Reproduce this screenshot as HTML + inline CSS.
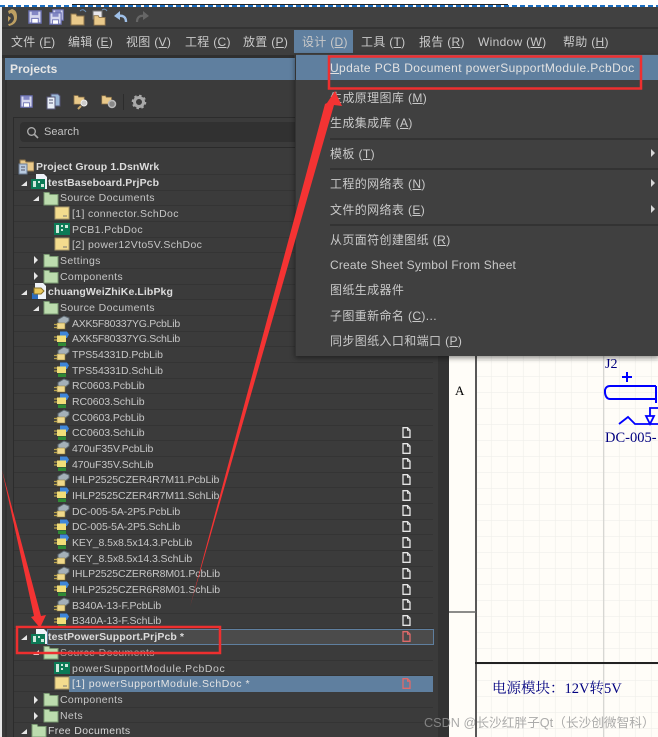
<!DOCTYPE html>
<html><head><meta charset="utf-8">
<style>
html,body{margin:0;padding:0;width:658px;height:737px;overflow:hidden;background:#3a3a3a}
body{position:relative;font-family:"Liberation Sans","Noto Sans CJK SC",sans-serif;color:#c9c9c9}
.a{position:absolute}
.m{position:absolute;top:34px;font-size:12px;line-height:16px;white-space:nowrap;letter-spacing:.3px}
.d{position:absolute;left:330px;font-size:12px;line-height:16px;white-space:nowrap;letter-spacing:.38px}
.r{position:absolute;font-size:10.5px;line-height:14px;margin-top:1px;white-space:nowrap;letter-spacing:.35px;color:#c6c6c6}
.c{letter-spacing:-.08px}
.p{letter-spacing:.55px}
.b{font-weight:bold;color:#dcdcdc;letter-spacing:.1px}
.l{position:absolute;left:14px;width:419px;height:1px;background:#343434}
.s{position:absolute;left:330px;width:328px;height:2px;background:#333}
.i{position:absolute;width:16px;height:16px}
.f{position:absolute;left:402px;width:9px;height:11px}
u{text-decoration:underline;text-underline-offset:1px}
</style></head><body>
<svg width="0" height="0" style="position:absolute">
<defs>
<symbol id="fold" viewBox="0 0 16 16"><path d="M1 2.500h5l1 2h8v10.500H1z" fill="#bcdcae" stroke="#7a9a72"/></symbol>
<symbol id="sch" viewBox="0 0 16 16"><path d="M1 2h14v12H1z" fill="#f3dc8e" stroke="#a89a6a"/><path d="M9 11h4" stroke="#777"/></symbol>
<symbol id="pcb" viewBox="0 0 16 16"><path d="M0 2h16v12H0z" fill="#0c7a56"/><path d="M2 4h3v8H2zM7 4h2v2H7zM7 8h2v2H7zM11 4h3v3h-3z" fill="#cfe8dc"/></symbol>
<symbol id="plib" viewBox="0 0 16 16"><path d="M4 4.500l6-3.500 5 2v3l-5 4-6-2z" fill="#a4b0b8" stroke="#5f6a72"/><path d="M3 8h8v6H3z" fill="#f0d98a" stroke="#8c7a3a" stroke-width=".6"/><path d="M0 9.500h3M0 12.500h3" stroke="#b9a24a" stroke-width="1.300"/></symbol>
<symbol id="slib" viewBox="0 0 16 16"><path d="M6 .5h7l2 3-2 3.500H6z" fill="#3f86d8"/><path d="M3 4.500h9v6.500H3z" fill="#f2de78"/><path d="M0 6h3M0 9h3" stroke="#b9a24a" stroke-width="1.300"/><path d="M4 11.500h8v3.500H4z" fill="#2f8a35"/></symbol>
<symbol id="prj" viewBox="0 0 16 16"><path d="M5 0h8l3 3v12H5z" fill="#eef2f8"/><path d="M0 5h14v10H0z" fill="#0c7a56"/><path d="M2 7h3v6H2zM7 7h2v2H7zM10 10h3v3h-3z" fill="#cfe8dc"/></symbol>
<symbol id="pkg" viewBox="0 0 16 16"><path d="M4 0h8l3 3v13H4z" fill="#eef2f8"/><path d="M1 10h6v6H1z" fill="#2b6cc0"/><path d="M3 5h7l3 3-3 3H3z" fill="#e8c75a" stroke="#86702a"/></symbol>
<symbol id="page" viewBox="0 0 9 11"><path d="M1 .7h4.500L8 3.200v7.100H1z" fill="none" stroke="currentColor" stroke-width="1.300"/><path d="M5.500 .7v2.600H8" fill="none" stroke="currentColor"/></symbol>
<symbol id="disk" viewBox="0 0 15 15"><path d="M1 1h13v13H1z" fill="#d6d8ee" stroke="#6d72b4" stroke-width="1.400"/><path d="M4 1.500h7v4H4z" fill="#8488c4"/><path d="M4 9h7v5H4z" fill="#fff" stroke="#6d72b4"/></symbol>
<symbol id="yf" viewBox="0 0 16 14"><path d="M1 2h5l1 2h7v9H1z" fill="#e9c98a" stroke="#8c734a"/></symbol>
<pattern id="g" width="16" height="16" patternUnits="userSpaceOnUse" x="491.700" y="393"><path d="M16 0V16M0 16H16" fill="none" stroke="#efeeea" stroke-width="1.200"/></pattern>
</defs>
</svg>

<!-- top strip -->
<div class="a" style="left:0;top:0;width:658px;height:5px;background:#fff"></div>
<div class="a" style="left:72px;top:4px;width:436px;height:2px;background:#222"></div>
<div class="a" style="left:0;top:5px;width:658px;height:2px;background:repeating-linear-gradient(90deg,#1b6fc2 0 5px,#fff 5px 8px)"></div>
<div class="a" style="left:0;top:7px;width:2px;height:730px;background:#e8e8e8"></div>
<div class="a" style="left:2px;top:7px;width:656px;height:20px;background:#414141"></div>
<div class="a" style="left:2px;top:27px;width:656px;height:2px;background:#333"></div>
<div class="a" style="left:2px;top:29px;width:656px;height:26px;background:#3e3e3e"></div>
<div class="a" style="left:2px;top:55px;width:292px;height:3px;background:#2f2f2f"></div>

<!-- toolbar icons -->
<svg class="a" style="left:0;top:6px" width="160" height="24" viewBox="0 0 160 24">
<path d="M8 5l4-2c4 1 5 4 5 8 0 5-3 8-8 9l-1-2c3 0 5-2 6-5 0-3-1-5-3-6l-2 1z M8 10l3 2-3 4z" fill="#bd9f62"/>
<use href="#disk" x="28" y="4" width="14" height="14"/>
<use href="#disk" x="52" y="3" width="12" height="12"/><use href="#disk" x="49" y="6" width="13" height="13"/>
<use href="#yf" x="70" y="6" width="16" height="14"/>
<path d="M80 5q3-3 6 1" fill="none" stroke="#6b8fb5"/>
<path d="M93 5h9v8H93z" fill="#e8e8ee" stroke="#777"/><use href="#yf" x="92" y="8" width="16" height="12"/>
<path d="M102 4q3-2 5 1" fill="none" stroke="#6b8fb5"/>
<path d="M126 16c0-5-3-7-8-6" fill="none" stroke="#9fc0e8" stroke-width="2.400"/><path d="M114 10l6-5v9z" fill="#9fc0e8"/>
<path d="M137 16c0-5 3-7 8-6" fill="none" stroke="#666" stroke-width="2.200"/><path d="M149 10l-6-5v9z" fill="#666"/>
</svg>

<!-- menu bar -->
<div class="m" style="left:11px">文件 (<u>F</u>)</div>
<div class="m" style="left:68px">编辑 (<u>E</u>)</div>
<div class="m" style="left:126px">视图 (<u>V</u>)</div>
<div class="m" style="left:185px">工程 (<u>C</u>)</div>
<div class="m" style="left:243px">放置 (<u>P</u>)</div>
<div class="a" style="left:294px;top:30px;width:59px;height:23px;background:#5f7f9f"></div>
<div class="m" style="left:302px">设计 (<u>D</u>)</div>
<div class="m" style="left:361px">工具 (<u>T</u>)</div>
<div class="m" style="left:419px">报告 (<u>R</u>)</div>
<div class="m" style="left:478px">Window (<u>W</u>)</div>
<div class="m" style="left:563px">帮助 (<u>H</u>)</div>

<!-- projects panel -->
<div class="a" style="left:5px;top:58px;width:290px;height:22px;background:#5f7f9f"></div>
<div class="a" style="left:10px;top:61px;font-size:12px;line-height:16px;font-weight:bold;color:#e6e6e6">Projects</div>
<div class="a" style="left:5px;top:80px;width:2px;height:657px;background:#333"></div>
<div class="a" style="left:7px;top:80px;width:431px;height:657px;background:#3b3b3b"></div>
<div class="a" style="left:13px;top:117px;width:1px;height:620px;background:#2c2c2c"></div>
<div class="a" style="left:13px;top:117px;width:420px;height:1px;background:#2c2c2c"></div>
<div class="a" style="left:438px;top:80px;width:11px;height:657px;background:#333"></div>

<svg class="a" style="left:18px;top:92px" width="132" height="20" viewBox="18 92 132 20">
<use href="#disk" x="20" y="95" width="13" height="13"/>
<path d="M51 94h7l2 2v10h-9z" fill="#9cb8d8" stroke="#557"/><path d="M47 97h8v12h-8z" fill="#e8eef6" stroke="#557"/><path d="M49 100h4M49 103h4" stroke="#557"/>
<use href="#yf" x="73" y="94" width="13" height="11"/><circle cx="84" cy="103" r="3" fill="#ccc" stroke="#eee"/><path d="M81 106l-3 3" stroke="#c9a86a" stroke-width="2"/>
<use href="#yf" x="101" y="94" width="12" height="11"/><circle cx="112" cy="104" r="3.500" fill="#888" stroke="#bbb" stroke-width="1.500"/>
<path d="M123.500 94v16" stroke="#2c2c2c"/>
<circle cx="139" cy="102" r="4.500" fill="none" stroke="#a8a8a8" stroke-width="3"/><circle cx="139" cy="102" r="6.400" fill="none" stroke="#a8a8a8" stroke-width="1.800" stroke-dasharray="2.500 2.500"/>
</svg>

<div class="a" style="left:20px;top:122px;width:280px;height:20px;background:#313131;border-radius:4px"></div>
<svg class="a" style="left:26px;top:126px" width="13" height="13"><circle cx="5.500" cy="5.500" r="3.800" fill="none" stroke="#aaa" stroke-width="1.400"/><path d="M8.500 8.500l3.500 3.500" stroke="#aaa" stroke-width="1.600"/></svg>
<div class="a" style="left:44px;top:125px;font-size:11px;line-height:14px;letter-spacing:.05px;color:#c2c2c2">Search</div>
<div class="a" style="left:19px;top:147px;width:414px;height:1px;background:#2a2a2a"></div>

<!-- row lines -->
<div class="l" style="top:174px"></div><div class="l" style="top:190px"></div><div class="l" style="top:205px"></div><div class="l" style="top:221px"></div><div class="l" style="top:237px"></div><div class="l" style="top:252px"></div><div class="l" style="top:268px"></div><div class="l" style="top:284px"></div><div class="l" style="top:299px"></div><div class="l" style="top:315px"></div><div class="l" style="top:331px"></div><div class="l" style="top:346px"></div><div class="l" style="top:362px"></div><div class="l" style="top:378px"></div><div class="l" style="top:393px"></div><div class="l" style="top:409px"></div><div class="l" style="top:425px"></div><div class="l" style="top:440px"></div><div class="l" style="top:456px"></div><div class="l" style="top:472px"></div><div class="l" style="top:487px"></div><div class="l" style="top:503px"></div><div class="l" style="top:519px"></div><div class="l" style="top:534px"></div><div class="l" style="top:550px"></div><div class="l" style="top:566px"></div><div class="l" style="top:581px"></div><div class="l" style="top:597px"></div><div class="l" style="top:613px"></div><div class="l" style="top:628px"></div><div class="l" style="top:660px"></div><div class="l" style="top:675px"></div><div class="l" style="top:691px"></div><div class="l" style="top:707px"></div><div class="l" style="top:722px"></div>

<!-- highlighted rows -->
<div class="a" style="left:47px;top:629px;width:385px;height:14px;background:#4b4b4b;border:1px solid #5f7f9f"></div>
<div class="a" style="left:69px;top:676px;width:364px;height:16px;background:#5f7f9f"></div>

<!-- expanders -->
<svg class="a" style="left:0;top:150px" width="50" height="587" viewBox="0 150 50 587" fill="#e6e6e6">
<path d="M21 186l6-5v5zM21 295l6-5v5zM21 640l6-5v5zM21 734l6-5v5zM33 201l6-5v5zM33 311l6-5v5zM33 655l6-5v5z"/>
<path d="M34 256l4 4-4 4zM34 272l4 4-4 4zM34 696l4 4-4 4zM34 712l4 4-4 4z"/>
</svg>

<!-- tree icons -->
<svg class="a" style="left:18px;top:159px" width="16" height="16" viewBox="0 0 16 16"><path d="M2 1h5l1 2h8v9H2z" fill="#e9c98a" stroke="#8c734a"/><path d="M1 5h8v10H1z" fill="#b9cbe0" stroke="#6a7b93"/><path d="M3 8h4M3 11h4" stroke="#556"/></svg>
<svg class="i" style="left:31px;top:174px"><use href="#prj"/></svg>
<svg class="i" style="left:43px;top:190px"><use href="#fold"/></svg>
<svg class="i" style="left:54px;top:205px"><use href="#sch"/></svg>
<svg class="i" style="left:54px;top:221px"><use href="#pcb"/></svg>
<svg class="i" style="left:54px;top:236px"><use href="#sch"/></svg>
<svg class="i" style="left:43px;top:252px"><use href="#fold"/></svg>
<svg class="i" style="left:43px;top:268px"><use href="#fold"/></svg>
<svg class="i" style="left:31px;top:283px"><use href="#pkg"/></svg>
<svg class="i" style="left:43px;top:299px"><use href="#fold"/></svg>
<svg class="i" style="left:54px;top:315px"><use href="#plib"/></svg>
<svg class="i" style="left:54px;top:331px"><use href="#slib"/></svg>
<svg class="i" style="left:54px;top:346px"><use href="#plib"/></svg>
<svg class="i" style="left:54px;top:362px"><use href="#slib"/></svg>
<svg class="i" style="left:54px;top:378px"><use href="#plib"/></svg>
<svg class="i" style="left:54px;top:393px"><use href="#slib"/></svg>
<svg class="i" style="left:54px;top:409px"><use href="#plib"/></svg>
<svg class="i" style="left:54px;top:425px"><use href="#slib"/></svg>
<svg class="i" style="left:54px;top:440px"><use href="#plib"/></svg>
<svg class="i" style="left:54px;top:456px"><use href="#slib"/></svg>
<svg class="i" style="left:54px;top:472px"><use href="#plib"/></svg>
<svg class="i" style="left:54px;top:487px"><use href="#slib"/></svg>
<svg class="i" style="left:54px;top:503px"><use href="#plib"/></svg>
<svg class="i" style="left:54px;top:519px"><use href="#slib"/></svg>
<svg class="i" style="left:54px;top:534px"><use href="#slib"/></svg>
<svg class="i" style="left:54px;top:550px"><use href="#plib"/></svg>
<svg class="i" style="left:54px;top:566px"><use href="#plib"/></svg>
<svg class="i" style="left:54px;top:581px"><use href="#slib"/></svg>
<svg class="i" style="left:54px;top:597px"><use href="#plib"/></svg>
<svg class="i" style="left:54px;top:613px"><use href="#slib"/></svg>
<svg class="i" style="left:31px;top:629px"><use href="#prj"/></svg>
<svg class="i" style="left:43px;top:644px"><use href="#fold"/></svg>
<svg class="i" style="left:54px;top:660px"><use href="#pcb"/></svg>
<svg class="i" style="left:54px;top:675px"><use href="#sch"/></svg>
<svg class="i" style="left:43px;top:691px"><use href="#fold"/></svg>
<svg class="i" style="left:43px;top:707px"><use href="#fold"/></svg>
<svg class="i" style="left:31px;top:722px"><use href="#fold"/></svg>

<!-- tree text -->
<div class="r b" style="left:36px;top:159px">Project Group 1.DsnWrk</div>
<div class="r b" style="left:48px;top:175px">testBaseboard.PrjPcb</div>
<div class="r" style="left:60px;top:190px">Source Documents</div>
<div class="r" style="left:72px;top:206px">[1] connector.SchDoc</div>
<div class="r" style="left:72px;top:222px">PCB1.PcbDoc</div>
<div class="r" style="left:72px;top:237px">[2] power12Vto5V.SchDoc</div>
<div class="r" style="left:60px;top:253px">Settings</div>
<div class="r" style="left:60px;top:269px">Components</div>
<div class="r b" style="left:48px;top:284px">chuangWeiZhiKe.LibPkg</div>
<div class="r" style="left:60px;top:300px">Source Documents</div>
<div class="r" style="left:72px;top:316px;letter-spacing:-.25px">AXK5F80337YG.PcbLib</div>
<div class="r" style="left:72px;top:331px;letter-spacing:-.25px">AXK5F80337YG.SchLib</div>
<div class="r c" style="left:72px;top:347px">TPS54331D.PcbLib</div>
<div class="r c" style="left:72px;top:363px">TPS54331D.SchLib</div>
<div class="r c" style="left:72px;top:378px">RC0603.PcbLib</div>
<div class="r c" style="left:72px;top:394px">RC0603.SchLib</div>
<div class="r c" style="left:72px;top:410px">CC0603.PcbLib</div>
<div class="r c" style="left:72px;top:425px">CC0603.SchLib</div>
<div class="r c" style="left:72px;top:441px">470uF35V.PcbLib</div>
<div class="r c" style="left:72px;top:457px">470uF35V.SchLib</div>
<div class="r c" style="left:72px;top:472px">IHLP2525CZER4R7M11.PcbLib</div>
<div class="r c" style="left:72px;top:488px">IHLP2525CZER4R7M11.SchLib</div>
<div class="r c" style="left:72px;top:504px">DC-005-5A-2P5.PcbLib</div>
<div class="r c" style="left:72px;top:519px">DC-005-5A-2P5.SchLib</div>
<div class="r c" style="left:72px;top:535px">KEY_8.5x8.5x14.3.PcbLib</div>
<div class="r c" style="left:72px;top:551px">KEY_8.5x8.5x14.3.SchLib</div>
<div class="r c" style="left:72px;top:566px">IHLP2525CZER6R8M01.PcbLib</div>
<div class="r c" style="left:72px;top:582px">IHLP2525CZER6R8M01.SchLib</div>
<div class="r c" style="left:72px;top:598px">B340A-13-F.PcbLib</div>
<div class="r c" style="left:72px;top:613px">B340A-13-F.SchLib</div>
<div class="r b" style="left:48px;top:629px">testPowerSupport.PrjPcb *</div>
<div class="r" style="left:60px;top:645px;color:#a8a8a8">Source Documents</div>
<div class="r p" style="left:72px;top:661px">powerSupportModule.PcbDoc</div>
<div class="r p" style="left:72px;top:676px;color:#e4e4e4">[1] powerSupportModule.SchDoc *</div>
<div class="r" style="left:60px;top:692px">Components</div>
<div class="r" style="left:60px;top:708px">Nets</div>
<div class="r" style="left:48px;top:723px;color:#d8d8d8">Free Documents</div>

<!-- status page icons -->
<svg class="f" style="top:427px;color:#e6e6e6"><use href="#page"/></svg>
<svg class="f" style="top:443px;color:#e6e6e6"><use href="#page"/></svg>
<svg class="f" style="top:458px;color:#e6e6e6"><use href="#page"/></svg>
<svg class="f" style="top:474px;color:#e6e6e6"><use href="#page"/></svg>
<svg class="f" style="top:490px;color:#e6e6e6"><use href="#page"/></svg>
<svg class="f" style="top:505px;color:#e6e6e6"><use href="#page"/></svg>
<svg class="f" style="top:521px;color:#e6e6e6"><use href="#page"/></svg>
<svg class="f" style="top:537px;color:#e6e6e6"><use href="#page"/></svg>
<svg class="f" style="top:552px;color:#e6e6e6"><use href="#page"/></svg>
<svg class="f" style="top:568px;color:#e6e6e6"><use href="#page"/></svg>
<svg class="f" style="top:584px;color:#e6e6e6"><use href="#page"/></svg>
<svg class="f" style="top:599px;color:#e6e6e6"><use href="#page"/></svg>
<svg class="f" style="top:615px;color:#e6e6e6"><use href="#page"/></svg>
<svg class="f" style="top:631px;color:#e06a6a"><use href="#page"/></svg>
<svg class="f" style="top:678px;color:#e06a6a"><use href="#page"/></svg>

<!-- schematic sheet -->
<svg class="a" style="left:449px;top:340px" width="209" height="397" viewBox="449 340 209 397">
<rect x="449" y="340" width="209" height="397" fill="#fffdf8"/>
<rect x="477" y="340" width="181" height="397" fill="url(#g)"/>
<path d="M603.700 340V737" stroke="#d4d4d0" stroke-width="1.200"/>
<path d="M476 340V737" stroke="#222" stroke-width="1.500"/>
<path d="M449 612H476" stroke="#666" stroke-width="1.500"/>
<path d="M475 663H658" stroke="#222" stroke-width="2"/>
<path d="M656 386H610q-4 0-5 4v3q1 6 5 6H656M656 386V403" fill="none" stroke="#0000ff" stroke-width="2"/>
<path d="M627 372V382M622 377H632" stroke="#0000ff" stroke-width="2"/>
<path d="M619 424L628 417L635 424H658M650 424L646 416H654ZM650 416V408H658" fill="none" stroke="#0000ff" stroke-width="1.800"/>
<text x="455" y="395" font-family="Liberation Serif" font-size="13" fill="#000">A</text>
<text x="605" y="368" font-family="Liberation Serif" font-size="14" fill="#000080">J2</text>
<text x="605" y="442" font-family="Liberation Serif" font-size="14.500" fill="#000080">DC-005-</text>
<text x="492" y="693" font-family="Liberation Serif,Noto Serif CJK SC,serif" font-size="14.500" fill="#000080">电源模块：12V转5V</text>
</svg>

<!-- dropdown -->
<div class="a" style="left:295px;top:54px;width:363px;height:302px;background:#404040;box-shadow:0 2px 5px rgba(0,0,0,.45);border-left:1px solid #333"></div>
<div class="a" style="left:296px;top:55px;width:362px;height:25px;background:#5f7f9f"></div>
<div class="d" style="top:60px;color:#e2e2e2"><u>U</u>pdate PCB Document powerSupportModule.PcbDoc</div>
<div class="d" style="top:90px">生成原理图库 (<u>M</u>)</div>
<div class="d" style="top:115px">生成集成库 (<u>A</u>)</div>
<div class="s" style="top:138px"></div>
<div class="d" style="top:146px">模板 (<u>T</u>)</div>
<div class="s" style="top:168px"></div>
<div class="d" style="top:176px">工程的网络表 (<u>N</u>)</div>
<div class="d" style="top:202px">文件的网络表 (<u>E</u>)</div>
<div class="s" style="top:224px"></div>
<div class="d" style="top:232px">从页面符创建图纸 (<u>R</u>)</div>
<div class="d" style="top:257px;letter-spacing:.2px">Create Sheet S<u>y</u>mbol From Sheet</div>
<div class="d" style="top:282px">图纸生成器件</div>
<div class="d" style="top:308px">子图重新命名 (<u>C</u>)...</div>
<div class="d" style="top:333px">同步图纸入口和端口 (<u>P</u>)</div>
<svg class="a" style="left:650px;top:148px" width="8" height="68" fill="#d8d8d8"><path d="M1 1l4 4-4 4zM1 31l4 4-4 4zM1 57l4 4-4 4z"/></svg>

<!-- annotations -->
<svg class="a" style="left:0;top:0" width="658" height="737" viewBox="0 0 658 737">
<rect x="329" y="56.500" width="312" height="32" fill="none" stroke="#ee2f2f" stroke-width="2.500"/>
<rect x="17" y="627" width="203" height="26" fill="none" stroke="#ee2f2f" stroke-width="2.500"/>
<path d="M335 91L342 106L334 105L190 607L325 104L327 103Z" fill="#f43333"/>
<path d="M2 470L41 616L46 615L40 628L31 617L34 616Z" fill="#f43333"/>
</svg>

<div class="a" style="left:424px;top:715px;font-size:12.700px;line-height:16px;white-space:nowrap;color:rgba(150,150,150,.8)">CSDN @长沙红胖子Qt（长沙创微智科）</div>
</body></html>
